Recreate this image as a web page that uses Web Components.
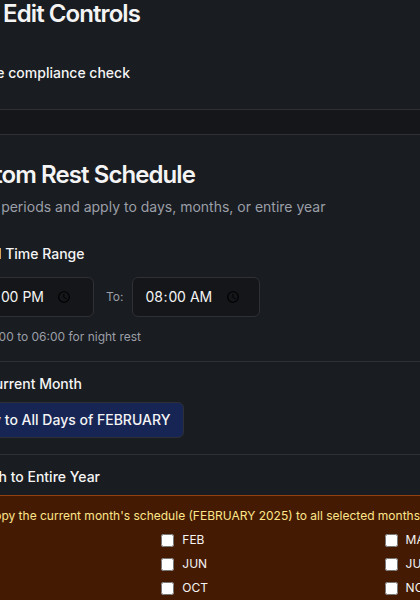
<!DOCTYPE html>
<html lang="en">
<head>
<meta charset="utf-8">
<title>Custom Rest Schedule</title>
<style>
  html, body { margin: 0; height: 600px; overflow: hidden; background: #151619; }
  body {
    --card: #191c20; --line: #2e3035; --fg: #f4f4f5; --muted: #9b9fa8; --field: #151619;
    font: 14px/20px Inter, "Liberation Sans", sans-serif; color: var(--fg);
  }
</style>
</head>
<body>
<schedule-page></schedule-page>
<script>
const define = (name, html, init) => {
  const template = document.createElement('template');
  template.innerHTML = html;
  customElements.define(name, class extends HTMLElement {
    constructor() {
      super();
      this.attachShadow({ mode: 'open' }).append(template.content.cloneNode(true));
    }
    connectedCallback() { if (init) init(this); }
  });
};

/* A line of text that ends at --end and runs off the left edge. */
define('end-line', `<style>
  :host { display: flex; justify-content: flex-end; width: var(--end); white-space: pre; height: 20px; }
  :host([kind=title]) { font-size: 24px; line-height: 32px; height: 32px; font-weight: 600; letter-spacing: -0.92px; }
  :host([kind=label]) { font-weight: 500; }
  :host([kind=muted]) { color: var(--muted); }
  :host([kind=hint]) { color: var(--muted); font-size: 12px; line-height: 16px; height: 16px; }
  :host([kind=note]) { color: #fde68a; font-size: 12px; line-height: 16px; height: 16px; }
</style><span><slot></slot></span>`);

define('time-field', `<style>
  :host { display: block; flex: none; width: 128px; height: 40px; }
  input { box-sizing: border-box; width: 128px; height: 40px; margin: 0; padding: 8px var(--pr, 15px) 8px var(--pl, 11.5px);
    border: 1px solid var(--line); border-radius: 6px; background: var(--field); letter-spacing: -0.2px;
    color: var(--fg); font: 14px/20px Inter, "Liberation Sans", sans-serif; }
</style><input type="time">`, el => {
  el.shadowRoot.querySelector('input').value = el.getAttribute('value');
});

define('apply-button', `<style>
  :host { display: flex; justify-content: flex-end; width: 184px; }
  button { box-sizing: border-box; flex: none; width: 224px; height: 36px; padding: 0 12.6px; text-align: right;
    border: 1px solid var(--line); border-radius: 6px; background: #172554; color: var(--fg);
    font: 500 14px/20px Inter, "Liberation Sans", sans-serif; white-space: nowrap; }
</style><button><slot></slot></button>`);

define('month-check', `<style>
  :host { display: block; height: 16px; }
  label { display: flex; align-items: center; gap: 8px; font-size: 12px; line-height: 16px; }
  input { width: 13px; height: 13px; margin: 0; }
</style><label><input type="checkbox"><slot></slot></label>`);

define('panel-card', `<style>
  :host { display: flex; flex-direction: column; box-sizing: border-box; background: var(--card);
    border: solid var(--line); border-width: 1px 0; }
</style><slot></slot>`);

define('schedule-page', `<style>
  :host { display: flex; flex-direction: column; height: 600px; overflow: hidden; }
  .edit { height: 110px; flex: none; border-top: 0; }
  .check { margin-top: 33px; }
  .rest { height: 466px; flex: none; margin-top: 24px; padding-top: 24px; border-bottom: 0; }
  .times { display: flex; justify-content: flex-end; align-items: center; width: 260px; margin-top: 13px; }
  .to { flex: none; width: 38px; box-sizing: border-box; padding-left: 12px; font-size: 12px; line-height: 16px; color: var(--muted); }
  hr { margin: 0; border: 0; height: 1px; flex: none; background: var(--line); }
  .notice { margin-top: 8px; height: 105px; box-sizing: border-box; border-top: 1px solid #92400e;
    background: #451a03; padding-top: 12px; display: flex; flex-direction: column; gap: 8px; }
  .months { display: grid; grid-template-columns: 223.3px 223.3px; gap: 8px 0; padding-left: 161.3px; }
</style>
<panel-card class="edit">
  <end-line kind="title" style="--end:140px;margin-top:-2px">Edit Controls</end-line>
  <end-line class="check" kind="label" style="--end:130px">e compliance check</end-line>
</panel-card>
<panel-card class="rest">
  <end-line kind="title" style="--end:195px">tom Rest Schedule</end-line>
  <end-line kind="muted" style="--end:325.5px;margin-top:6px">periods and apply to days, months, or entire year</end-line>
  <end-line kind="label" style="--end:84.5px;margin-top:27px">l Time Range</end-line>
  <div class="times"><time-field value="22:00" style="--pl:13px;--pr:18px"></time-field><span class="to">To:</span><time-field value="08:00"></time-field></div>
  <end-line kind="hint" style="--end:141px;margin-top:12px">00 to 06:00 for night rest</end-line>
  <hr style="margin-top:16px">
  <end-line kind="label" style="--end:82px;margin-top:12px">urrent Month</end-line>
  <apply-button style="margin-top:8px">y to All Days of FEBRUARY</apply-button>
  <hr style="margin-top:16px">
  <end-line kind="label" style="--end:100px;margin-top:12px">h to Entire Year</end-line>
  <div class="notice">
    <end-line kind="note" style="--end:420px">opy the current month's schedule (FEBRUARY 2025) to all selected months</end-line>
    <div class="months">
      <month-check>FEB</month-check><month-check>MA</month-check>
      <month-check>JUN</month-check><month-check>JU</month-check>
      <month-check>OCT</month-check><month-check>NO</month-check>
    </div>
  </div>
</panel-card>`);
</script>
</body>
</html>
